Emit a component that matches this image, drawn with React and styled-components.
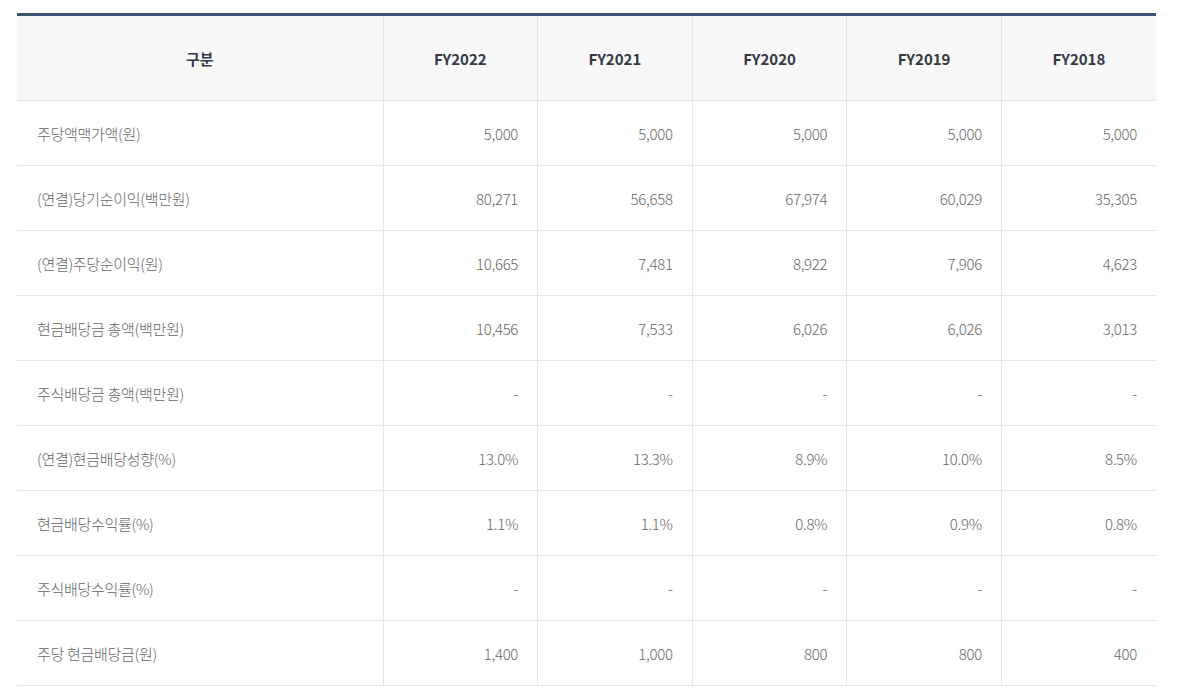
import React from 'react';
import styled, { createGlobalStyle } from 'styled-components';

const GlobalStyle = createGlobalStyle`
  body {
    margin: 0;
    background: #ffffff;
    font-family: "Noto Sans CJK KR", "Noto Sans", sans-serif;
  }
`;

const Wrap = styled.div`
  padding: 13px 35px 0 17px;
`;

const Table = styled.table`
  width: 1139px;
  border-collapse: collapse;
  table-layout: fixed;
  border-top: 3px solid #3d5370;
`;

const Col = styled.col`
  width: ${(p) => (p.wide ? '366px' : '154.6px')};
`;

const Th = styled.th`
  height: 84px;
  padding: 0;
  background: #f8f8f8;
  color: #323a46;
  font-size: 15px;
  font-weight: 700;
  text-align: center;
  border-bottom: 1px solid #e5e5e5;
  border-left: ${(p) => (p.first ? 'none' : '1px solid #e5e5e5')};
`;

const Td = styled.td`
  height: 64px;
  padding: ${(p) => (p.label ? '0 0 0 20px' : '0 19px 0 0')};
  color: #666666;
  font-size: 15px;
  font-weight: 300;
  letter-spacing: -0.3px;
  text-align: ${(p) => (p.label ? 'left' : 'right')};
  border-bottom: 1px solid #e5e5e5;
  border-left: ${(p) => (p.label ? 'none' : '1px solid #e5e5e5')};
`;

const years = ['FY2022', 'FY2021', 'FY2020', 'FY2019', 'FY2018'];

const rows = [
  ['주당액맥가액(원)', '5,000', '5,000', '5,000', '5,000', '5,000'],
  ['(연결)당기순이익(백만원)', '80,271', '56,658', '67,974', '60,029', '35,305'],
  ['(연결)주당순이익(원)', '10,665', '7,481', '8,922', '7,906', '4,623'],
  ['현금배당금 총액(백만원)', '10,456', '7,533', '6,026', '6,026', '3,013'],
  ['주식배당금 총액(백만원)', '-', '-', '-', '-', '-'],
  ['(연결)현금배당성향(%)', '13.0%', '13.3%', '8.9%', '10.0%', '8.5%'],
  ['현금배당수익률(%)', '1.1%', '1.1%', '0.8%', '0.9%', '0.8%'],
  ['주식배당수익률(%)', '-', '-', '-', '-', '-'],
  ['주당 현금배당금(원)', '1,400', '1,000', '800', '800', '400'],
];

const App = () => {
  return (
    <Wrap>
      <GlobalStyle />
      <Table>
        <colgroup>
          <Col wide />
          {years.map((y) => (
            <Col key={y} />
          ))}
        </colgroup>
        <thead>
          <tr>
            <Th first>구분</Th>
            {years.map((y) => (
              <Th key={y}>{y}</Th>
            ))}
          </tr>
        </thead>
        <tbody>
          {rows.map((r) => (
            <tr key={r[0]}>
              <Td label>{r[0]}</Td>
              {r.slice(1).map((v, i) => (
                <Td key={i}>{v}</Td>
              ))}
            </tr>
          ))}
        </tbody>
      </Table>
    </Wrap>
  );
};

export default App;
